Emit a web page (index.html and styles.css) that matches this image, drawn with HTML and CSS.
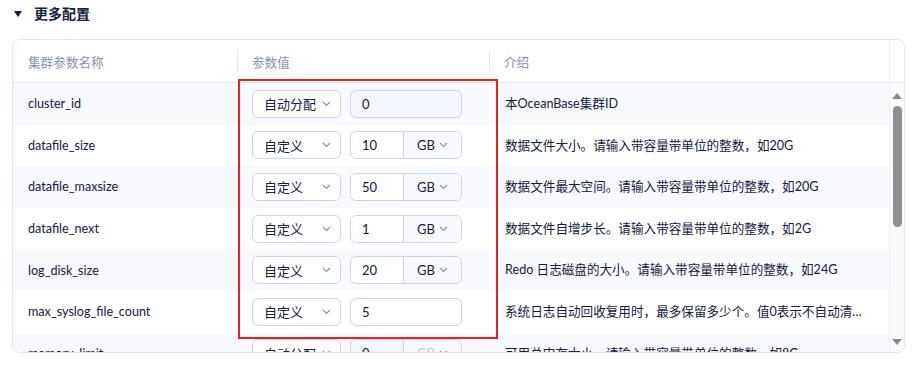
FILE: index.html
```html
<!DOCTYPE html>
<html lang="zh-CN">
<head>
<meta charset="utf-8">
<title>更多配置</title>
<link rel="stylesheet" href="styles.css">
</head>
<body>
<div class="page">
  <div class="sec-title"><span class="caret"></span>更多配置</div>

  <div class="card">
    <div class="thead">
      <div class="th">集群参数名称</div>
      <div class="th sep">参数值</div>
      <div class="th sep">介绍</div>
      <div class="th-scroll"></div>
    </div>

    <div class="tbody">
      <div class="rows">
        <div class="tr odd">
          <div class="td">cluster_id</div>
          <div class="td val">
            <div class="select">自动分配<svg class="arrow" viewBox="0 0 9 6"><path d="M1 1l3.5 3.5L8 1"/></svg></div>
            <div class="ipt disabled">0</div>
          </div>
          <div class="td desc">本OceanBase集群ID</div>
        </div>
        <div class="tr">
          <div class="td">datafile_size</div>
          <div class="td val">
            <div class="select">自定义<svg class="arrow" viewBox="0 0 9 6"><path d="M1 1l3.5 3.5L8 1"/></svg></div>
            <div class="ipt group"><span class="num">10</span><span class="unit">GB<svg class="arrow" viewBox="0 0 9 6"><path d="M1 1l3.5 3.5L8 1"/></svg></span></div>
          </div>
          <div class="td desc">数据文件大小。请输入带容量带单位的整数，如20G</div>
        </div>
        <div class="tr odd">
          <div class="td">datafile_maxsize</div>
          <div class="td val">
            <div class="select">自定义<svg class="arrow" viewBox="0 0 9 6"><path d="M1 1l3.5 3.5L8 1"/></svg></div>
            <div class="ipt group"><span class="num">50</span><span class="unit">GB<svg class="arrow" viewBox="0 0 9 6"><path d="M1 1l3.5 3.5L8 1"/></svg></span></div>
          </div>
          <div class="td desc">数据文件最大空间。请输入带容量带单位的整数，如20G</div>
        </div>
        <div class="tr">
          <div class="td">datafile_next</div>
          <div class="td val">
            <div class="select">自定义<svg class="arrow" viewBox="0 0 9 6"><path d="M1 1l3.5 3.5L8 1"/></svg></div>
            <div class="ipt group"><span class="num">1</span><span class="unit">GB<svg class="arrow" viewBox="0 0 9 6"><path d="M1 1l3.5 3.5L8 1"/></svg></span></div>
          </div>
          <div class="td desc">数据文件自增步长。请输入带容量带单位的整数，如2G</div>
        </div>
        <div class="tr odd">
          <div class="td">log_disk_size</div>
          <div class="td val">
            <div class="select">自定义<svg class="arrow" viewBox="0 0 9 6"><path d="M1 1l3.5 3.5L8 1"/></svg></div>
            <div class="ipt group"><span class="num">20</span><span class="unit">GB<svg class="arrow" viewBox="0 0 9 6"><path d="M1 1l3.5 3.5L8 1"/></svg></span></div>
          </div>
          <div class="td desc">Redo 日志磁盘的大小。请输入带容量带单位的整数，如24G</div>
        </div>
        <div class="tr">
          <div class="td">max_syslog_file_count</div>
          <div class="td val">
            <div class="select">自定义<svg class="arrow" viewBox="0 0 9 6"><path d="M1 1l3.5 3.5L8 1"/></svg></div>
            <div class="ipt">5</div>
          </div>
          <div class="td desc">系统日志自动回收复用时，最多保留多少个。值0表示不自动清理。</div>
        </div>
        <div class="tr odd">
          <div class="td">memory_limit</div>
          <div class="td val">
            <div class="select">自动分配<svg class="arrow" viewBox="0 0 9 6"><path d="M1 1l3.5 3.5L8 1"/></svg></div>
            <div class="ipt group disabled"><span class="num">0</span><span class="unit">GB<svg class="arrow" viewBox="0 0 9 6"><path d="M1 1l3.5 3.5L8 1"/></svg></span></div>
          </div>
          <div class="td desc">可用总内存大小。请输入带容量带单位的整数，如8G</div>
        </div>
      </div>

      <div class="scrollbar">
        <span class="sb-up"></span>
        <span class="sb-thumb"></span>
        <span class="sb-space"></span>
        <span class="sb-down"></span>
      </div>
    </div>
  </div>

  <div class="mark"></div>
</div>
</body>
</html>
```

FILE: styles.css
```css
*{box-sizing:border-box;}
body{margin:0;background:#fff;color:#132039;font-family:Lato,"Noto Sans CJK SC",sans-serif;font-size:12.6px;}
.page{position:relative;padding:0 12px;}

.sec-title{height:28px;line-height:28px;font-size:14px;font-weight:600;display:flex;align-items:center;}
.caret{width:0;height:0;border-left:4.5px solid transparent;border-right:4.5px solid transparent;border-top:6px solid #132039;margin:0 12px 0 2px;}

.card{margin-top:11px;height:314px;border:1px solid #e2e8f3;border-radius:8px;overflow:hidden;}

.thead{display:grid;grid-template-columns:224px 252px 400px 1fr;height:43px;border-bottom:1px solid #e2e8f3;}
.th{position:relative;display:flex;align-items:center;padding-left:15px;color:#8592ad;}
.th.sep:before{content:"";position:absolute;left:0;top:11px;height:20px;border-left:1px solid #e2e8f3;}
.th-scroll{border-left:1px solid #edf0f6;}

.tbody{display:flex;height:270px;}
.rows{flex:0 0 876px;overflow:hidden;}
.tr{display:grid;grid-template-columns:224px 252px 400px;height:41.6px;}
.tr.odd{background:#f8f9fc;}
.td{display:flex;align-items:center;padding:0 16px 0 15px;white-space:nowrap;}
.td.val{padding-left:15px;gap:9px;}
.td.desc{padding-left:16px;padding-right:16px;overflow:hidden;text-overflow:ellipsis;display:block;line-height:41.6px;}

.select{width:89px;height:28px;border:1px solid #cdd5e4;border-radius:6px;background:#fff;display:flex;align-items:center;justify-content:space-between;padding:0 9px 0 11px;font-size:13px;}
.arrow{width:9px;height:6px;fill:none;stroke:#8592ad;stroke-width:1.1;}
.ipt{width:112px;height:28px;border:1px solid #cdd5e4;border-radius:6px;background:#fff;display:flex;align-items:center;padding-left:11px;font-size:13px;}
.ipt.disabled{background:#f3f6fc;}
.ipt.group{padding-left:0;overflow:hidden;}
.ipt .num{flex:0 0 52px;padding-left:11px;}
.ipt .unit{flex:1;height:100%;border-left:1px solid #cdd5e4;background:#f7f9fc;display:flex;align-items:center;justify-content:space-between;padding:0 13px 0 13px;}
.ipt.disabled .unit{color:#c5cbd8;}

.scrollbar{flex:1;border-left:1px solid #edf0f6;background:#fafafa;display:flex;flex-direction:column;align-items:center;padding:10px 0 8px;}
.sb-up{width:0;height:0;border-left:5px solid transparent;border-right:5px solid transparent;border-bottom:6px solid #8a8a8a;}
.sb-thumb{width:9px;height:121px;margin-top:7px;background:#8f8f8f;border-radius:5px;}
.sb-space{flex:1;}
.sb-down{width:0;height:0;border-left:5px solid transparent;border-right:5px solid transparent;border-top:6px solid #8a8a8a;}

.mark{position:absolute;left:238px;top:79px;width:260px;height:260px;border:2px solid #e5202b;}
```
